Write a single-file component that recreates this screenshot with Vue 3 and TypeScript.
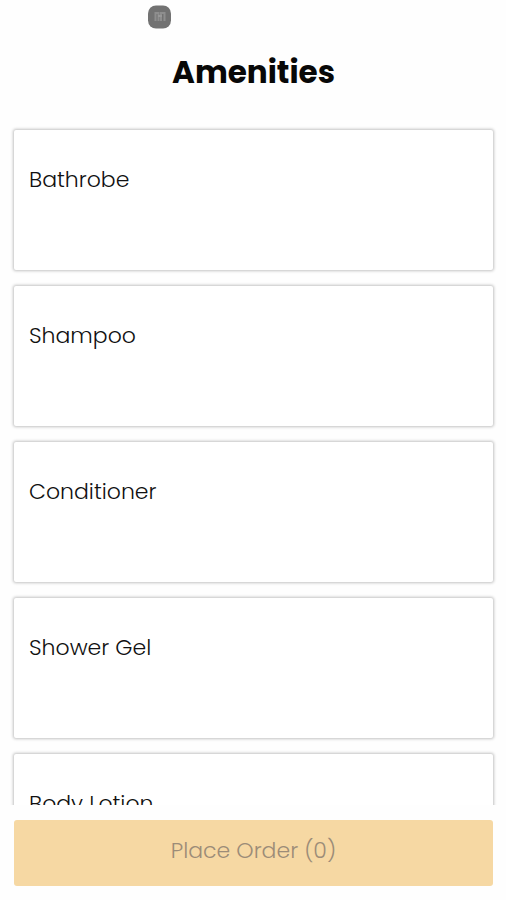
<script setup lang="ts">
import { computed, ref } from 'vue'

interface Amenity {
  name: string
  quantity: number
}

const amenities = ref<Amenity[]>([
  { name: 'Bathrobe', quantity: 0 },
  { name: 'Shampoo', quantity: 0 },
  { name: 'Conditioner', quantity: 0 },
  { name: 'Shower Gel', quantity: 0 },
  { name: 'Body Lotion', quantity: 0 },
])

const total = computed<number>(() =>
  amenities.value.reduce((sum, item) => sum + item.quantity, 0),
)
</script>

<template>
  <main class="page">
    <header class="header">
      <svg class="badge" viewBox="0 0 24 24" aria-hidden="true">
        <rect x="0" y="0.5" width="23" height="23" rx="8" fill="#727272" />
        <path d="M7.500 16V8H10.500V16M13 16V8H16.500V16" fill="none" stroke="#8e8e8e" stroke-width="2" />
        <path d="M10 11H14" fill="none" stroke="#989898" stroke-width="2" />
      </svg>
      <h1 class="title">Amenities</h1>
    </header>
    <ul class="list">
      <li v-for="item in amenities" :key="item.name" class="card">
        <h2 class="name">{{ item.name }}</h2>
      </li>
    </ul>
    <footer class="footer">
      <button class="order" type="button" :disabled="total === 0">Place Order ({{ total }})</button>
    </footer>
  </main>
</template>

<style>
body {
  margin: 0;
  background: #fefefe;
}
</style>

<style scoped>
.page {
  display: flex;
  flex-direction: column;
  height: 100vh;
  font-family: Poppins, Inter, "Open Sans", sans-serif;
  color: #111;
}

.header {
  display: flex;
  flex-direction: column;
  flex: none;
  padding: 5px 13px 0 14px;
}

.badge {
  width: 24px;
  height: 24px;
  margin-left: 28%;
}

.title {
  margin: 19px 0 0;
  font-size: 31px;
  font-weight: 700;
  line-height: 48px;
  text-align: center;
  color: #080808;
}

.list {
  display: flex;
  flex: 1;
  flex-direction: column;
  gap: 16px;
  min-height: 0;
  margin: 0;
  padding: 34px 13px 0 14px;
  overflow: hidden;
  list-style: none;
}

.card {
  box-sizing: border-box;
  flex: none;
  height: 140px;
  padding: 32px 15px;
  background: #fff;
  border-radius: 2px;
  box-shadow: 0 0 3px 1px rgba(0, 0, 0, 0.24);
}

.name {
  margin: 0;
  font-size: 22px;
  font-weight: 300;
  line-height: 36px;
}

.footer {
  flex: none;
  padding: 15px 13px 14px 14px;
}

.order {
  display: block;
  width: 100%;
  height: 66px;
  padding: 0 0 4px;
  border: 0;
  border-radius: 3px;
  background: #f6d8a3;
  color: #9c8c78;
  font-family: inherit;
  font-size: 22px;
  font-weight: 300;
  line-height: 36px;
}
</style>
